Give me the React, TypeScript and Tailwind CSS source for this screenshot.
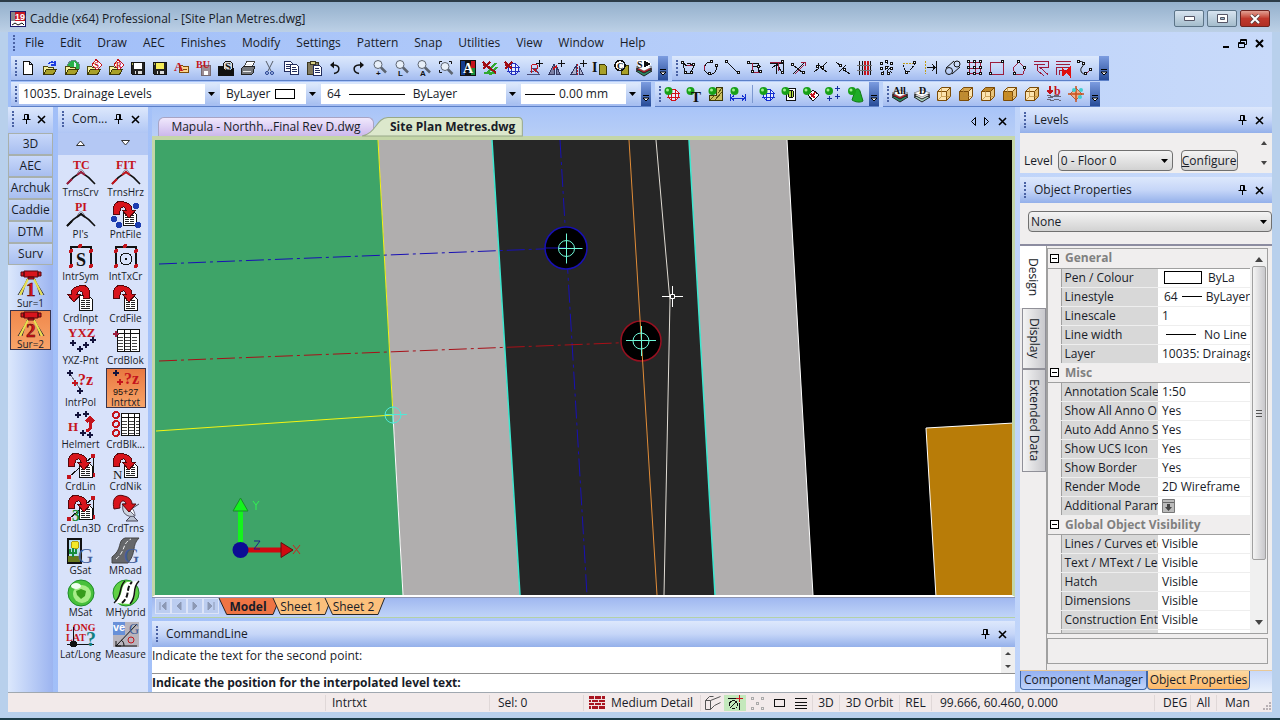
import React, { useState, ReactNode } from 'react';

const RED = '#c4141c';
const WINE = '#9c1c3c';
const NAVY = '#1c1c8c';

type IconProps = { children: ReactNode; size?: number };

const Icon = ({ children, size = 16 }: IconProps) => (
  <svg width={size} height={size} viewBox="0 0 16 16" fill="none" stroke="#111" strokeWidth="1" shapeRendering="crispEdges" className="shrink-0 overflow-visible">
    {children}
  </svg>
);

const Glyph = ({ x, y, size, fill = '#111', children }: { x: number; y: number; size: number; fill?: string; children: string }) => (
  <text x={x} y={y} fontSize={size} fill={fill} stroke="none" fontWeight="bold" fontFamily="Liberation Serif, serif">{children}</text>
);

const Folder = () => (
  <g>
    <path d="M1.500 14.500V6.500h4l1 1h5v3" fill="#f4f0a0" stroke="#4c4810" />
    <path d="M1.500 14.500l3-5h10l-3 5z" fill="#a8a028" stroke="#3c3808" />
  </g>
);

const Disk = ({ label = '#fff', body = '#222' }) => (
  <g>
    <path d="M1.500 2.500h13v12h-12l-1-1z" fill={body} stroke="#111" />
    <path d="M4 3h8v6H4z" fill={label} stroke="none" />
    <path d="M5 11h7v3H5z" fill="#ddd" stroke="none" />
    <path d="M6 11h2v3H6z" fill="#222" stroke="none" />
    <path d="M2 3h1v2H2z" fill="#b0b050" stroke="none" />
  </g>
);

const Magnifier = ({ letter }: { letter: string }) => (
  <g shapeRendering="auto">
    <circle cx="6" cy="4.500" r="4" fill="#e8f0fa" stroke="#5c6470" />
    <path d="M9 7.500l5 5" stroke="#5c6470" strokeWidth="2.500" />
    <text x="4" y="16" fontSize="8" fill="#111" stroke="none" fontWeight="bold" fontFamily="Liberation Sans, sans-serif">{letter}</text>
  </g>
);

const Pages = ({ x = 0 }) => (
  <g>
    <path d={`M${x + 0.5} 1.500h6l2 2v8h-8z`} fill="#fff" stroke="#222c5c" />
    <path d={`M${x + 2} 4.500h4M${x + 2} 6.500h5M${x + 2} 8.500h5`} stroke="#222c5c" />
  </g>
);

const Ball = ({ x = 4.5, y = 5 }) => (
  <g stroke="none" shapeRendering="auto">
    <circle cx={x} cy={y} r="4" fill="#18a018" />
    <circle cx={x - 1} cy={y - 1} r="1.500" fill="#a0f090" />
  </g>
);

const Stack = ({ top, base = '#2c8c64' }: { top: string; base?: string }) => (
  <g shapeRendering="auto">
    <path d="M0 11l8-3 8 3-8 5z" fill={base} stroke="#222" />
    <path d="M0 9l8-3 8 3-8 4z" fill={top} stroke="#222" />
    <path d="M0 7l8-3 8 3-8 4z" fill="#fff" stroke="#444" strokeWidth=".5" />
  </g>
);

const Cube = ({ top = '#fce4b0', front = '#fce4b0', side = '#e8c47c' }) => (
  <g stroke="#7c4c08" shapeRendering="auto">
    <path d="M1.500 5.500h9v9h-9z" fill={front} />
    <path d="M1.500 5.500l4-4h9l-4 4z" fill={top} />
    <path d="M10.500 5.500l4-4v9l-4 4z" fill={side} />
    <path d="M5.500 2v8.500h9M5.500 10.500l-4 4" stroke="#b88838" strokeWidth=".7" />
  </g>
);

const Nodes = ({ points }: { points: number[][] }) => (
  <g>
    {points.map(([x, y]) => <rect key={`${x}-${y}`} x={x - 0.5} y={y - 0.5} width="2" height="2" fill="#fff" stroke="#111" />)}
  </g>
);

const Cross = () => <path d="M1 2l7 7M8 2l-7 7M1 5l7 2" stroke="#a00c14" strokeWidth="2" />;

const Globe = ({ color }: { color: string }) => (
  <g stroke={color}>
    <circle cx="9.500" cy="9" r="5.500" fill="#fff" fillOpacity=".6" />
    <path d="M3 7.500h13M3 11.500h13M7.500 3v12M11.500 3v12" />
  </g>
);

const mainTools: [string, ReactNode][] = [
  ['New', <path d="M3.500 1.500h6l3 3v10h-9zM9.500 1.500v3h3" fill="#fff" />],
  ['Open', <><Folder /><path d="M6 4c3-3 6-2 7 0M13 1v4h-4" stroke="#1c3ce0" strokeWidth="1.500" /></>],
  ['Open from web', <><circle cx="9.500" cy="6.500" r="6" fill="#28b048" stroke="#688" /><path d="M9.500 1v9a5 5 0 0 0 0-9z" fill="#d8f0f0" stroke="none" /><Folder /></>],
  ['Open symbol', <><Folder /><path d="M10 -.500l6 5.500-5 5-5-5z" fill="#fff" stroke={RED} /><Glyph x={8} y={8} size={9} fill={RED}>S</Glyph></>],
  ['Open reference', <><Folder /><path d="M10 -.500l6 5.500-5 5-5-5z" fill="#fff" stroke={RED} /><Glyph x={8} y={8} size={8} fill={RED}>R</Glyph></>],
  ['Save', <Disk />],
  ['Save as', <Disk label="#f4ec58" />],
  ['Archive', <><path d="M5.500 12.500v-7h3l1 1h5v6z" fill="#fcd48c" stroke="#7c4c08" /><path d="M9 9.500h4" stroke="#7c4c08" /><Glyph x={0} y={11} size={13} fill={RED}>A</Glyph></>],
  ['Backup', <><path d="M5.500 5.500h9v10h-9z" fill="#9c8c94" stroke="#746870" /><path d="M8 11h4v4H8z" fill="#fff" stroke="none" /><Glyph x={0} y={8} size={10} fill={RED}>BU</Glyph></>],
  ['Scripts', <><path d="M0 15V6h4l2 2h9v7z" fill="#111" /><circle cx="10" cy="6" r="5" fill="#ddd" /><Glyph x={7} y={10} size={11}>S</Glyph></>],
  ['Print', <><path d="M4.500 6.500l2-5h8l-2 5z" fill="#fff" stroke="#444" /><path d="M1.500 8.500l2-2h11l-1 6-2 2h-10z" fill="#76787c" stroke="#222" /><path d="M3 11.500h8M6 4.500h6" stroke="#e8e8e8" /></>],
  ['Cut', <g shapeRendering="auto"><path d="M4 1l5 10M11 1L6 11" stroke="#555c68" /><circle cx="5" cy="13" r="1.500" stroke="#223c8c" /><circle cx="10" cy="13" r="1.500" stroke="#223c8c" /></g>],
  ['Copy', <><Pages /><g transform="translate(6 3)"><Pages /></g></>],
  ['Paste', <><path d="M1.500 2.500h11v12h-11z" fill="#80785c" stroke="#3c3820" /><path d="M4.500 1.500h5v3h-5z" fill="#d8d088" stroke="#3c3820" /><g transform="translate(7 4)"><Pages /></g></>],
  ['Undo', <g shapeRendering="auto"><path d="M6 13.500c6-1 7-8 0-8.500H3" strokeWidth="1.500" /><path d="M2 5l4-3.500v7z" fill="#111" stroke="none" /></g>],
  ['Redo', <g shapeRendering="auto"><path d="M9 13.500c-6-1-7-8 0-8.500h3" strokeWidth="1.500" /><path d="M14 5l-4-3.500v7z" fill="#111" stroke="none" /></g>],
  ['Zoom in', <Magnifier letter="+" />],
  ['Zoom last', <Magnifier letter="L" />],
  ['Zoom all', <Magnifier letter="A" />],
  ['Zoom extents', <g shapeRendering="auto"><circle cx="7" cy="6.500" r="4" fill="#e8f0fa" stroke="#5c6470" /><path d="M10 9.500l4.500 4.500" stroke="#5c6470" strokeWidth="2.500" /><path d="M1.500 4v-2.500H4M11 1.500h2.500V4M1.500 10v2.500H4" /></g>],
  ['Attributes', <><path d="M.500 .500h15v15H.500z" fill="#111" /><path d="M1 1h4v14H1z" fill="#143c8c" stroke="none" /><path d="M11 1h4v7h-4z" fill={RED} stroke="none" /><path d="M11 8h4v7h-4z" fill="#188c3c" stroke="none" /><Glyph x={3} y={13} size={14} fill="#fff">A</Glyph></>],
  ['Erase', <><path d="M4 14L14 3M8 15l7-8M2 13h12" stroke="#30a830" strokeWidth="2" /><Cross /><path d="M8 8l6 5" stroke="#a00c14" strokeWidth="2" /></>],
  ['Erase globe', <><Globe color="#2430c0" /><Cross /></>],
  ['Rotate copy', <><path d="M1 14.500h13M4 11h4M6 8h3l4 6" stroke="#484c78" /><path d="M5 13V7c0-4 7-3 7 0 0 3-5 2-5 2l5 4" stroke={RED} /><path d="M13.500 0v7M10 3.500h7" /></>],
  ['Move copy', <><path d="M1 14l5-10v10zM8 14V5l4 9z" fill="#7c80a4" stroke="#343860" /><path d="M5 9l4-3" stroke={RED} strokeWidth="2" /><path d="M13.500 0v7M10 3.500h7" /></>],
  ['Mirror copy', <><path d="M1 14l5-8v8zM9 14V6l4 8z" fill="#b0b4d0" stroke="#343860" /><path d="M7.500 4v12" stroke={RED} strokeDasharray="2 1" /><path d="M13.500 0v7M10 3.500h7" /></>],
  ['Insert page', <><path d="M7.500 4.500h5l2 2v8h-7z" fill="#a8a028" stroke="#3c3808" /><Glyph x={0} y={12} size={14}>I</Glyph></>],
  ['Exchange page', <><path d="M7.500 5.500h7v9h-7z" fill="#a8a028" stroke="#3c3808" /><circle cx="6" cy="5.500" r="5" fill="#fff" strokeWidth="1.500" /><Glyph x={3} y={9} size={9}>C</Glyph></>],
  ['Layers', <><Stack top="#c41c24" /><path d="M1 0h10l5 4-5 4H2z" fill="#fff" stroke="none" /><Glyph x={1} y={8} size={10}>S</Glyph><path d="M8 1l6 3-6 3z" fill="#111" /></>],
];

const lineTools: [string, ReactNode][] = [
  ['Polyline', <><path d="M2 3l4 3M6 3l7 2-3 8H4L2 3" /><path d="M6 5l7 0" stroke={WINE} /><Nodes points={[[1, 2], [12, 4], [10, 12], [4, 12]]} /></>],
  ['Curve', <><path d="M7 2C2 2 1 7 2 11l3 3h4c4-1 5-5 4-8" /><path d="M1.500 5v5" stroke={WINE} /><Nodes points={[[8, 1], [13, 5], [6, 13]]} /></>],
  ['Line', <><path d="M2 2l12 12" /><Nodes points={[[1, 1], [13, 12]]} /></>],
  ['Fillet', <><path d="M2 3.500h9.500v9M5 6.500h9" /><path d="M5.500 3v9.500h9" stroke={WINE} /><Nodes points={[[1, 2], [5, 11], [13, 11], [11, 6]]} /></>],
  ['Chamfer', <><path d="M1 3.500h13v10M3 8l5-4 5 9M7.500 4v10" /><path d="M1 2.500h12M9.500 3v8" stroke={WINE} /><Nodes points={[[13, 1], [13, 12]]} /></>],
  ['Trim', <><path d="M2 14L13 3M2 5l10 8" /><path d="M4 14l9-9M10 2h4v4" stroke={WINE} /><Nodes points={[[1, 4], [12, 12]]} /></>],
  ['Break', <><path d="M1 12l5-4M9 7l5-5M5 3l3 5 6 4" /><Nodes points={[[4, 6], [9, 7]]} /></>],
  ['Divide', <><path d="M1 2l5 4M9 10l6 4M11 5l-7 7" /><Nodes points={[[5, 5], [9, 9]]} /></>],
  ['Parallel', <><path d="M2.500 1v14M13.500 1v14M5.500 1v14" /><path d="M8 1v14M11 1v14" stroke={RED} strokeWidth="2" /><path d="M0 5.500h15M0 10.500h15" stroke="#777" /></>],
  ['Array', <><path d="M3 3l10 10M13 3L3 13M8 2v12M2 8h12" strokeDasharray="2 2" /><Nodes points={[[2, 3], [7, 1], [12, 3], [2, 8], [7, 7], [12, 8], [3, 13], [9, 13]]} /></>],
  ['Angle', <><path d="M2 5l4 9 8-10" strokeDasharray="2 1" /><path d="M2 3.500h12" stroke="#c09c14" strokeDasharray="2 1" /><Nodes points={[[13, 2], [5, 12]]} /></>],
  ['Extend', <><path d="M13.500 1v13M4 7.500h9M9 4l3 3.500L9 11" /><path d="M2.500 1v13" stroke="#c09c14" strokeDasharray="2 1" /></>],
  ['Tangent', <g shapeRendering="auto"><circle cx="4" cy="11" r="3.500" /><circle cx="12" cy="4" r="3" /><path d="M1 8l8-7M7 14l8-7" /></g>],
  ['Grid', <><path d="M2.500 2v12M8.500 2v12M13.500 2v12M2 2.500h12M2 8.500h12M2 13.500h12" stroke={WINE} /><Nodes points={[[1, 1], [7, 1], [13, 1], [1, 7], [7, 7], [13, 7], [1, 13], [7, 13], [13, 13]]} /></>],
  ['Rectangle', <><path d="M1.500 2.500h13v12h-13z" stroke={WINE} /><Nodes points={[[13, 1], [1, 13]]} /></>],
  ['Polygon', <><path d="M8 2l6 6-2 6H4L2 8z" stroke={WINE} /><Nodes points={[[7, 1], [13, 7], [3, 13]]} /></>],
  ['Offset', <path d="M1 1.500h14v6H7l8 7M1 4.500h10M12 4.500H4v6l7 5" stroke={WINE} />],
  ['Multi offset', <><path d="M1 1.500h15M1 4.500h14M1.500 15V7.500h13M4.500 15v-5h8" stroke={WINE} /><path d="M7 7l3 5 5-5v9l-3-4-4 4z" fill="#e01010" stroke="#e01010" /></>],
  ['Spline', <g shapeRendering="auto"><path d="M1 2c6-2 7 2 4 5s0 8 4 7l4-4" /><path d="M9 14l4-4" stroke={WINE} /><Nodes points={[[1, 1], [6, 3], [8, 13], [13, 9]]} /></g>],
];

const surveyTools: [string, ReactNode][] = [
  ['Model', <><Globe color="#d01018" /><Ball /></>],
  ['Text', <><Ball /><Glyph x={5} y={16} size={15}>T</Glyph></>],
  ['Section', <><path d="M8.500 1.500h6v13h-13v-5h7z" fill="#ccc060" stroke="#3c3808" /><path d="M2 14l5-5M7 14l7-8M10 7l4-5" stroke="#5c5410" /><Ball /></>],
  ['Dimension', <><Ball /><path d="M.500 8v7M15.500 8v7M1 12h14M4 9.500L1 12l3 2.500M12 9.500l3 2.500-3 2.500" stroke="#1430d0" /></>],
];

const modelTools: [string, ReactNode][] = [
  ['Surface', <><Globe color="#1430d0" /><Ball /></>],
  ['Contour', <><path d="M5.500 2.500h9v12h-9z" fill="#fff" /><ellipse cx="10" cy="8" rx="3" ry="4" fill="#b8e040" /><path d="M10 4v8" /><Ball /></>],
  ['Breakline', <><path d="M5 9l5-5 6 5-6 6z" fill="#fff" /><path d="M8 8l4 4M12 6l-3 5" stroke={RED} strokeWidth="2" /><Ball x={4} /></>],
  ['Points', <><Ball x={4} /><path d="M12.500 0v5M10 2.500h5M4.500 10v5M2 12.500h5M12.500 8v5M10 10.500h5" stroke="#1430a0" /></>],
  ['Cone', <g shapeRendering="auto"><path d="M5 14l3-9c1-3 4-3 5 0l3 10c-3 2-8 1-11-1z" fill="#20ac28" stroke="#107818" /><Ball x={5} y={5} /></g>],
];

const viewTools: [string, ReactNode][] = [
  ['All layers', <><Stack top="#c41c24" /><Glyph x={1} y={8} size={10}>All</Glyph></>],
  ['Default layer', <><Stack top="#f4f4f4" base="#a8d0c0" /><Glyph x={5} y={8} size={10}>D</Glyph></>],
  ['Isometric', <Cube />],
  ['Back view', <Cube front="#c08c30" top="#d8a850" side="#fce4b0" />],
  ['Top view', <Cube top="#c08828" />],
  ['Front view', <Cube front="#c88c24" />],
  ['Side view', <Cube side="#e4b868" />],
  ['Drop to level', <><path d="M1 10c3-2 4 2 7 0s4 1 7 0M1 14c3-2 4 2 7 0s4 1 7 0M2 12l11-2" stroke="#667" /><path d="M4 0v7M1.500 4.500L4 7.500l2.500-3" stroke={RED} strokeWidth="2" /><Glyph x={8} y={9} size={12} fill={RED}>b</Glyph></>],
  ['Rotate view', <g shapeRendering="auto"><path d="M8 2l6 6-6 6-6-6z" fill="#f0b090" stroke="#b06040" /><path d="M8 0v16M0 8h16" stroke="#c8501c" strokeWidth="1.500" /><circle cx="6" cy="4" r="2" fill="#40d0d0" stroke="none" /><circle cx="13" cy="4" r="2" fill="#40d0d0" stroke="none" /><circle cx="12" cy="11" r="2" fill="#40d0d0" stroke="none" /></g>],
];

const RedArrow = ({ flip = false }) => (
  <path
    d="M3 14C0 1 8-1 13 1c6 1 8 5 8 8h4l-7 8-7-8h4c-1-5-7-4-6 4z"
    fill="#d8141c"
    stroke="#54080c"
    transform={flip ? 'translate(26 0) scale(-1 1)' : undefined}
  />
);

const Sheet = ({ x = 14, y = 10 }) => (
  <g>
    <path d={`M${x + 0.5} ${y + 0.5}h9l4 4v11h-13z`} fill="#fff" stroke="#111" />
    <path d={`M${x + 2} ${y + 5.5}h4M${x + 7} ${y + 5.5}h4M${x + 2} ${y + 7.5}h4M${x + 7} ${y + 7.5}h4M${x + 2} ${y + 9.5}h4M${x + 7} ${y + 9.5}h4M${x + 2} ${y + 11.5}h4M${x + 7} ${y + 11.5}h4M${x + 2} ${y + 13.5}h9`} stroke="#222" />
  </g>
);

const Plus = ({ x, y, color = '#14143c' }: { x: number; y: number; color?: string }) => (
  <path d={`M${x - 3} ${y}h6M${x} ${y - 3}v6`} stroke={color} strokeWidth="2" />
);

const Bend = ({ color = '#111' }) => (
  <g shapeRendering="auto">
    <path d="M1 25c5-6 9-9 14-12 5 3 9 6 14 12" strokeWidth="1.500" />
    <path d="M11 16c2-7 6-7 8 0" stroke="#889" />
    <path d="M1 25l5-5M11 16l4-3 4 3" stroke={color} strokeWidth="2" />
  </g>
);

const Frame = ({ children }: { children: ReactNode }) => (
  <g>
    <path d="M5 22V4h20v20" strokeWidth="2" />
    {[[5, 8], [14, 3], [25, 8], [5, 23], [25, 23]].map(([x, y]) => <circle key={`${x}-${y}`} cx={x} cy={y} r="2" fill={RED} stroke="none" />)}
    {children}
  </g>
);

const Grid = ({ x = 6 }) => (
  <g>
    <path d={`M${x + 0.5} 2.500h${28 - x}v22h-${28 - x}z`} fill="#fff" />
    <path d={`M${x} 6.500h${29 - x}M${x + 7.5} 3v21M${x + 13.5} 3v21`} />
    <path d={`M${x + 1} 10.500h${27 - x}M${x + 1} 13.500h${27 - x}M${x + 1} 16.500h${27 - x}M${x + 1} 19.500h${27 - x}M${x + 1} 22.500h${27 - x}`} stroke="#444" strokeDasharray="5 2" />
  </g>
);

const LinePts = () => (
  <g>
    <path d="M3 24L27 3v20" />
    <path d="M1 22h4v4H1zM25 1h4v4h-4zM25 20h4v4h-4z" fill={RED} stroke="none" />
  </g>
);

const components: [string, ReactNode][] = [
  ['TrnsCrv', <><Bend color={WINE} /><Glyph x={7} y={10} size={12} fill={RED}>TC</Glyph></>],
  ['TrnsHrz', <><Bend color={RED} /><Glyph x={5} y={10} size={12} fill={RED}>FIT</Glyph></>],
  ["PI's", <><Bend /><Glyph x={9} y={10} size={12} fill={RED}>PI</Glyph></>],
  ['PntFile', <><Sheet x={12} y={9} /><RedArrow /><g fill="#1c3cb0" stroke="none"><circle cx="25" cy="5" r="3" /><circle cx="3" cy="18" r="3" /><circle cx="8" cy="24" r="3" /><circle cx="27" cy="24" r="3" /></g></>],
  ['IntrSym', <Frame><Glyph x={10} y={23} size={18}>S</Glyph></Frame>],
  ['IntTxCr', <Frame><circle cx="15" cy="16" r="6" /><circle cx="15" cy="16" r="1" fill="#111" /></Frame>],
  ['CrdInpt', <><Sheet x={13} /><RedArrow flip /></>],
  ['CrdFile', <><Sheet x={13} /><RedArrow /></>],
  ['YXZ-Pnt', <><Glyph x={2} y={10} size={13} fill={RED}>YXZ</Glyph><Plus x={7} y={16} /><Plus x={14} y={22} /><Plus x={20} y={18} /><Plus x={27} y={13} /></>],
  ['CrdBlok', <><Grid /><Plus x={5} y={7} color={WINE} /></>],
  ['IntrPol', <><path d="M4 5l12 18" stroke="#778" /><Plus x={4} y={4} /><Plus x={9} y={14} color={RED} /><Plus x={14} y={22} /><Glyph x={12} y={16} size={16} fill={RED}>?z</Glyph></>],
  ['Intrtxt', <><Plus x={5} y={4} /><Plus x={9} y={13} color={RED} /><Glyph x={13} y={15} size={16} fill={RED}>?z</Glyph><text x="2" y="26" fontSize="9" fill="#111" stroke="none" fontFamily="Liberation Sans">95+27</text></>],
  ['Helmert', <><Glyph x={2} y={20} size={13} fill={RED}>H</Glyph><path d="M20 20c7-2 5-8 4-12M20 11l4-4 4 4" stroke={RED} strokeWidth="3" /><Plus x={12} y={4} /><Plus x={20} y={3} /><Plus x={17} y={22} /><Plus x={24} y={24} /></>],
  ['CrdBlk...', <><Grid x={10} /><g stroke={RED} strokeWidth="2"><circle cx="5" cy="4" r="3" /><circle cx="5" cy="13" r="3" /><circle cx="5" cy="22" r="3" /></g></>],
  ['CrdLin', <><LinePts /><Sheet x={13} y={9} /><RedArrow /></>],
  ['CrdNik', <><Sheet x={13} y={9} /><RedArrow /><text x="2" y="26" fontSize="13" fill="#111" stroke="none" fontFamily="Liberation Serif">N</text></>],
  ['CrdLn3D', <><LinePts /><Sheet x={13} y={9} /><RedArrow /><Glyph x={6} y={26} size={16} fill="#188c30">3</Glyph></>],
  ['CrdTrns', <g shapeRendering="auto"><path d="M15 26l6-6 6 6z" fill="#b8c0d0" stroke="#445" /><path d="M12 9c-2 9 4 14 12 12z" fill="#cdd4e0" stroke="#556" /><path d="M12 9c6-2 12 6 12 12z" fill="#f8faff" stroke="#667" /><path d="M17 16L28 9" stroke="#445" /><RedArrow /></g>],
  ['GSat', <><path d="M1.500 1.500h13v24h-13z" fill="#b4dcf0" strokeWidth="2" /><path d="M2 19h12v6H2z" fill="#68781c" stroke="none" /><circle cx="9" cy="8" r="4" fill="#f4e828" stroke="#b09c10" /><path d="M7 20v-9M4 12v4h6v-4" stroke="#188c3c" strokeWidth="2" /><text x="12" y="26" fontSize="21" fill="#405c98" stroke="none" fontFamily="Liberation Serif">G</text></>],
  ['MRoad', <g shapeRendering="auto"><path d="M1 20C12 12 6 4 14 1h14c-8 8-2 14-11 25H1z" fill="#65676a" stroke="#444" /><path d="M5 22C15 14 11 6 20 2" stroke="#f4f4f4" strokeDasharray="4 2" /><text x="13" y="26" fontSize="21" fill="#405c98" stroke="none" fontFamily="Liberation Serif">G</text></g>],
  ['MSat', <g shapeRendering="auto"><circle cx="15" cy="14" r="13" fill="#48c03c" stroke="#1c8c28" /><circle cx="16" cy="15" r="9" fill="#a8ec88" stroke="none" /><path d="M10 12l5-2 5 2-1 5-4 3-4-4z" fill="#389c1c" stroke="none" /><ellipse cx="10" cy="7" rx="5" ry="3" fill="#f0fff0" stroke="none" /></g>],
  ['MHybrid', <g shapeRendering="auto"><circle cx="15" cy="14" r="13" fill="#60d044" stroke="#1c8c28" /><path d="M3 24C14 16 8 8 16 3l12-1c-7 8 0 14-9 23z" fill="#fff" stroke="none" /><path d="M3 24C12 17 7 8 14 2M19 25C27 16 20 10 28 2" strokeWidth="1.500" /><path d="M11 24c9-8 3-14 10-21" strokeWidth="2" strokeDasharray="5 2" /></g>],
  ['Lat/Long', <><Glyph x={0} y={10} size={10} fill={RED}>LONG</Glyph><Glyph x={0} y={20} size={10} fill={RED}>LAT</Glyph><path d="M7.500 6v20M1 23.500h27" /><circle cx="7.500" cy="23" r="3" fill="#111" /><Glyph x={20} y={25} size={20} fill="#148080">?</Glyph></>],
  ['Measure', <g shapeRendering="auto"><path d="M2 1h12v13H2z" fill="#6890d8" stroke="none" /><path d="M14 1h14v25H2V14h12z" fill="#b8b4bc" stroke="none" /><text x="2" y="10" fontSize="11" fontWeight="bold" fill="#fff" stroke="none" fontFamily="Liberation Sans">ve</text><path d="M4 25h22M5 25L26 3M5 20v5h5M13 25c0-3-1-5-3-6" /><circle cx="20" cy="19" r="3" stroke={RED} /><text x="18" y="13" fontSize="14" fill="#405c98" stroke="none" fontFamily="Liberation Serif">G</text></g>],
];

const menus = ['File', 'Edit', 'Draw', 'AEC', 'Finishes', 'Modify', 'Settings', 'Pattern', 'Snap', 'Utilities', 'View', 'Window', 'Help'];

const groups: { title: string; rows: [string, ReactNode][] }[] = [
  {
    title: 'General',
    rows: [
      ['Pen / Colour', <span className="flex items-center gap-[6px] pl-[2px]"><span className="h-[13px] w-[38px] shrink-0 border border-black bg-white" />ByLa</span>],
      ['Linestyle', <span className="flex items-center gap-1 pl-[2px]">64<span className="w-[20px] shrink-0 border-t border-black" />ByLayer</span>],
      ['Linescale', '1'],
      ['Line width', <span className="flex items-center gap-2 pl-1"><span className="w-[30px] shrink-0 border-t border-black" />No Line</span>],
      ['Layer', '10035: Drainage L'],
    ],
  },
  {
    title: 'Misc',
    rows: [
      ['Annotation Scale', '1:50'],
      ['Show All Anno O', 'Yes'],
      ['Auto Add Anno S', 'Yes'],
      ['Show UCS Icon', 'Yes'],
      ['Show Border', 'Yes'],
      ['Render Mode', '2D Wireframe'],
      ['Additional Param', (
        <button aria-label="Additional parameters" className="block">
          <svg width="13" height="14" viewBox="0 0 13 14"><path d="M.5 .5h12v13H.500z" fill="#bbb" stroke="#777" /><path d="M1 3.500h11" stroke="#666" /><path d="M5 5h3v3h2l-3.500 4L3 8h2z" fill="#444" /></svg>
        </button>
      )],
    ],
  },
  {
    title: 'Global Object Visibility',
    rows: [
      ['Lines / Curves etc', 'Visible'],
      ['Text / MText / Le', 'Visible'],
      ['Hatch', 'Visible'],
      ['Dimensions', 'Visible'],
      ['Construction Enti', 'Visible'],
      ['', ''],
    ],
  },
];

const Grip = () => <span className="h-[16px] w-[2px] shrink-0 border-l-2 border-dotted border-[#4a62a4]" />;

const PinClose = ({ gap = 'gap-2' }: { gap?: string }) => (
  <div className={`flex items-center ${gap}`}>
    <button aria-label="Pin"><svg width="9" height="10" viewBox="0 0 9 10" fill="none" stroke="#000"><path d="M2.500 .5h4v5h-4zM5.500 1v4M.5 5.500h8M4.500 6v4" /></svg></button>
    <button aria-label="Close"><svg width="9" height="9" viewBox="0 0 9 9" fill="none" stroke="#000" strokeWidth="1.600"><path d="M1 1l7 7M8 1l-7 7" /></svg></button>
  </div>
);

const Caption = ({ title }: { title: string }) => (
  <div className="flex h-[26px] shrink-0 items-center bg-linear-to-b from-[#dde8fc] via-[#c6d6f8] to-[#94b0ea] pr-2 pl-1">
    <Grip />
    <h2 className="ml-2 flex-1 truncate">{title}</h2>
    <PinClose />
  </div>
);

const Overflow = () => (
  <button aria-label="More buttons" className="flex w-[10px] shrink-0 items-end justify-center bg-linear-to-b from-[#7c9ce0] to-[#284c98] pb-1">
    <svg width="8" height="7" viewBox="0 0 8 7"><path d="M1 .5h6" stroke="#000" /><path d="M1 3h6L4 6z" fill="#fff" stroke="#000" /></svg>
  </button>
);

const Bar = ({ children }: { children: ReactNode }) => (
  <div className="flex h-[25px] border-b border-[#5c80c8] bg-linear-to-b from-[#dce8fc] via-[#c4d6f8] to-[#a4bcf0]">
    <div className="flex items-center pr-[3px] pl-1">
      <Grip />
      {children}
    </div>
    <Overflow />
  </div>
);

const Tools = ({ items }: { items: [string, ReactNode][] }) => (
  <>
    {items.map(([label, art]) => (
      <button key={label} aria-label={label} title={label} className="flex h-[22px] w-[22px] shrink-0 items-center justify-center">
        <Icon>{art}</Icon>
      </button>
    ))}
  </>
);

type ComboProps = { label: string; value: string; className: string; before?: ReactNode; after?: ReactNode };

const Combo = ({ label, value, className, before, after }: ComboProps) => (
  <label className={`flex h-[20px] items-center bg-white ${className}`}>
    {before}
    <select aria-label={label} className="min-w-0 flex-1 appearance-none bg-transparent leading-5 outline-none">
      <option>{value}</option>
    </select>
    {after}
    <span className="flex h-[20px] w-[12px] shrink-0 items-center justify-center bg-linear-to-b from-[#dce8fc] to-[#a8c0f0]">
      <svg width="7" height="4" viewBox="0 0 7 4"><path d="M0 0h7L3.500 4z" /></svg>
    </span>
  </label>
);

const GreyCombo = ({ label, value, className }: ComboProps) => (
  <div className={`flex items-center rounded-sm border border-[#707070] bg-linear-to-b from-[#f4f4f4] to-[#d2d2d2] pr-1 pl-[2px] ${className}`}>
    <select aria-label={label} className="min-w-0 flex-1 appearance-none bg-transparent leading-4 outline-none">
      <option>{value}</option>
    </select>
    <svg width="7" height="4" viewBox="0 0 7 4" className="shrink-0"><path d="M0 0h7L3.500 4z" /></svg>
  </div>
);

const TitleBar = () => (
  <header className="flex h-[32px] shrink-0 items-center border-t-2 border-[#2c3c48] bg-linear-to-b from-[#94b0cc] to-[#bcd0e6] px-[10px] pt-[3px]">
    <svg width="16" height="16" viewBox="0 0 16 16">
      <path d="M0 0h16v16H0z" fill="#1c1c6c" />
      <path d="M1 1h14v10H1z" fill="#fff" />
      <path d="M5 1h10v9H5z" fill="#c81824" />
      <text x="5" y="9" fontSize="9" fontWeight="bold" fill="#fff" fontFamily="Liberation Sans">19</text>
      <path d="M2 1v9M4 1v9" stroke="#111" />
      <path d="M1 11h14v4H1z" fill="#fff" />
      <path d="M2 14l3-2 3 2 4-2 2 2" stroke="#111" fill="none" />
    </svg>
    <h1 className="ml-1 flex-1">Caddie (x64) Professional - [Site Plan Metres.dwg]</h1>
    <div className="flex gap-[3px]">
      <button aria-label="Minimize" className="flex h-[17px] w-[30px] items-center justify-center rounded-xs border border-[#5c7488] bg-linear-to-b from-[#d8e4f0] to-[#a4bccc]">
        <svg width="11" height="5" viewBox="0 0 11 5"><path d="M.5 .5h10v4H.500z" fill="#fff" stroke="#556" /></svg>
      </button>
      <button aria-label="Restore" className="flex h-[17px] w-[30px] items-center justify-center rounded-xs border border-[#5c7488] bg-linear-to-b from-[#d8e4f0] to-[#a4bccc]">
        <svg width="11" height="9" viewBox="0 0 11 9"><path d="M.5 .5h10v8H.500z" fill="#fff" stroke="#556" /><path d="M3.500 3.500h4v2h-4z" fill="#9bc" stroke="#556" /></svg>
      </button>
      <button aria-label="Close" className="flex h-[17px] w-[30px] items-center justify-center rounded-xs border border-[#6c2420] bg-linear-to-b from-[#e0a094] via-[#c0382c] to-[#b03024]">
        <svg width="12" height="10" viewBox="0 0 12 10"><path d="M2 1l8 8M10 1L2 9" stroke="#544" strokeWidth="3.500" /><path d="M2 1l8 8M10 1L2 9" stroke="#fff" strokeWidth="2" /></svg>
      </button>
    </div>
  </header>
);

const MenuBar = () => (
  <div className="flex h-[24px] shrink-0 items-center pr-2 pb-[2px] pl-[5px]">
    <Grip />
    <nav className="ml-[2px] flex flex-1">
      {menus.map(menu => <button key={menu} className="px-2">{menu}</button>)}
    </nav>
    <div className="flex items-center gap-2">
      <button aria-label="Minimize drawing"><svg width="8" height="9" viewBox="0 0 8 9"><path d="M1 8h6" stroke="#000" strokeWidth="2" /></svg></button>
      <button aria-label="Restore drawing"><svg width="9" height="9" viewBox="0 0 9 9" fill="none" stroke="#000"><path d="M2.500 3V.5h6v5H7M3 1.500h5M.5 3.500h6v5h-6zM1 4.500h5" /></svg></button>
      <button aria-label="Close drawing"><svg width="9" height="9" viewBox="0 0 9 9" stroke="#000" strokeWidth="2"><path d="M1 1l7 7M8 1L1 8" /></svg></button>
    </div>
  </div>
);

const Toolbars = () => (
  <div className="flex shrink-0 flex-col gap-px pl-[3px]">
    <div className="flex gap-1">
      <Bar><Tools items={mainTools} /></Bar>
      <Bar><Tools items={lineTools} /></Bar>
    </div>
    <div className="flex gap-1">
      <Bar>
        <div className="ml-[2px] flex gap-[3px]">
          <Combo label="Layer" value="10035. Drainage Levels" className="w-[198px] pl-1" />
          <Combo label="Pen colour" value="ByLayer" className="w-[98px] pl-[6px]" after={<span className="mr-[11px] h-[10px] w-[20px] shrink-0 border border-black" />} />
          <Combo label="Linestyle" value="ByLayer" className="w-[197px] pl-[6px]" before={<><span>64</span><span className="mr-2 ml-2 w-[56px] border-t border-black" /></>} />
          <Combo label="Line width" value="0.00 mm" className="w-[117px] pl-1" before={<span className="mr-1 w-[30px] border-t border-black" />} />
        </div>
      </Bar>
      <Bar>
        <Tools items={surveyTools} />
        <span className="mx-[3px] h-[18px] border-l border-[#7c98d0]" />
        <Tools items={modelTools} />
      </Bar>
      <Bar><Tools items={viewTools} /></Bar>
    </div>
  </div>
);

const Tripod = ({ digit }: { digit: string }) => (
  <svg width="30" height="27" viewBox="0 0 30 27" fill="none" className="shrink-0">
    <path d="M12 9L2 25M18 9l10 16M11 9l-5 16M19 9l5 16" stroke="#333" />
    <path d="M12 9L4 25M18 9l8 16" stroke="#e8e050" strokeWidth="2" />
    <path d="M8 1h14v6H8zM5 2h3v4H5zM22 2h3v4h-3zM12 7h6v2h-6z" fill="#d8141c" stroke="#54080c" />
    <text x="10" y="26" fontSize="19" fontWeight="bold" fontFamily="Liberation Serif, serif" fill="#d8141c" stroke="#400" strokeWidth=".5">{digit}</text>
  </svg>
);

const CategoryColumn = () => {
  const [survey, setSurvey] = useState<number>(2);

  return (
    <aside className="flex w-[45px] shrink-0 flex-col bg-linear-to-r from-[#dce8fc] to-[#9cb4f0]">
      <div className="flex h-[26px] shrink-0 items-center justify-between bg-linear-to-b from-[#dde8fc] to-[#b0c6f4] pr-[7px] pb-[2px] pl-1">
        <Grip />
        <PinClose gap="gap-[6px]" />
      </div>
      {['3D', 'AEC', 'Archuk', 'Caddie', 'DTM', 'Surv'].map(name => (
        <button key={name} className="h-[22px] shrink-0 border border-[#a8b0ac] bg-linear-to-b from-[#c8d8fa] to-[#a8bef0]">{name}</button>
      ))}
      <div className="flex flex-col gap-px px-[2px] pt-1">
        {[1, 2].map(n => (
          <button
            key={n}
            onClick={() => setSurvey(n)}
            className={`flex h-[40px] flex-col items-center border text-[10px] leading-3 ${survey === n ? 'border-[#38344c] bg-linear-to-b from-[#f0884c] to-[#f8a468]' : 'border-transparent'}`}
          >
            <Tripod digit={String(n)} />
            Sur={n}
          </button>
        ))}
      </div>
    </aside>
  );
};

const ComponentColumn = () => {
  const [active, setActive] = useState<string>('Intrtxt');

  return (
    <aside className="ml-[5px] flex w-[90px] shrink-0 flex-col bg-[#d8e2fa]">
      <div className="flex h-[26px] shrink-0 items-center bg-linear-to-b from-[#dde8fc] to-[#b0c6f4] pr-2 pb-[2px] pl-1">
        <Grip />
        <h2 className="ml-2 flex-1 truncate">Com...</h2>
        <PinClose />
      </div>
      <div className="flex h-[22px] shrink-0 items-center justify-around bg-[#b4c8f4] pb-[3px]">
        <button aria-label="Scroll up"><svg width="9" height="6" viewBox="0 0 9 6"><path d="M.5 5.500L4.500 1l4 4.500z" fill="#fff" stroke="#333" /></svg></button>
        <button aria-label="Scroll down"><svg width="9" height="6" viewBox="0 0 9 6"><path d="M.5 .5L4.500 5l4-4.500z" fill="#fff" stroke="#333" /></svg></button>
      </div>
      <div className="grid grid-cols-2 justify-items-center gap-y-[2px] pt-[3px]">
        {components.map(([name, art]) => (
          <button
            key={name}
            onClick={() => setActive(name)}
            className={`flex h-[40px] w-[40px] flex-col items-center border text-[10px] leading-3 whitespace-nowrap ${active === name ? 'border-[#38344c] bg-linear-to-b from-[#e87840] to-[#f8a468]' : 'border-transparent'}`}
          >
            <svg width="30" height="27" viewBox="0 0 30 27" fill="none" stroke="#111" shapeRendering="crispEdges" className="shrink-0 overflow-visible">{art}</svg>
            {name}
          </button>
        ))}
      </div>
    </aside>
  );
};

const Marker = ({ x, y, r = 8 }: { x: number; y: number; r?: number }) => (
  <g stroke="#70f8d8" fill="none">
    <circle cx={x} cy={y} r={r} />
    <path d={`M${x - r} ${y}h${r * 3}M${x} ${y - 15}v30`} />
  </g>
);

const Drawing = () => (
  <svg className="block h-full w-full bg-black" viewBox="155 140 857 455" preserveAspectRatio="xMinYMin slice" fill="none">
    <path d="M155 140h223l15 275 10 180H155z" fill="#3ea468" />
    <path d="M378 140h114l28 455H403l-10-180z" fill="#b0aeae" />
    <path d="M492 140h197l26 455H520z" fill="#262626" />
    <path d="M689 140h98l26 455h-98z" fill="#b0aeae" />
    <path d="M926 428l88-5v174h-78z" fill="#b87c08" stroke="#fff" />
    <path d="M378 140l15 275-237 16" stroke="#f4f414" />
    <path d="M393 415l10 180M787 140l26 455" stroke="#fff" />
    <path d="M492 140l28 455M689 140l26 455" stroke="#3ce8d0" strokeWidth="1.500" />
    <g stroke="#1810b4" strokeDasharray="18 4 3 4">
      <path d="M159 264l407-16M560 140l27 455" />
    </g>
    <path d="M159 361l482-19" stroke="#a81018" strokeDasharray="18 4 3 4" />
    <path d="M656 140l13 150 1 10-6 295" stroke="#e0dcd4" />
    <circle cx="566" cy="248" r="21" fill="#000" stroke="#1810b4" strokeWidth="1.500" />
    <path d="M545 248h21" stroke="#1810b4" />
    <circle cx="641" cy="341" r="20" fill="#000" stroke="#981020" strokeWidth="1.500" />
    <path d="M629 140l28 455" stroke="#e08c38" />
    <Marker x={566.5} y={248.5} />
    <g stroke="#70f8d8"><circle cx="641" cy="341" r="8" /><path d="M626 340.500h30M641.500 326v30" /></g>
    <g stroke="#50e8d8"><circle cx="393" cy="415" r="8" /><path d="M385 414.500h22M393 406v18" /></g>
    <path d="M662 296.500h8M675 296.500h8M672.500 286v8M672.500 299v8M670.500 294.500h4v4h-4z" stroke="#fff" />
    <g>
      <path d="M240.500 548v-40" stroke="#14f41c" strokeWidth="5" />
      <path d="M233 511l7.500-13 7.500 13z" fill="#14f41c" stroke="#188c28" />
      <path d="M244 550h38" stroke="#d00810" strokeWidth="5" />
      <path d="M281 542.500l12 7.500-12 7.500z" fill="#d00810" stroke="#601010" />
      <circle cx="240.500" cy="550" r="8" fill="#0c0c94" />
      <path d="M253 501l3 4 3-4M256 505v5" stroke="#30f450" />
      <path d="M293 545l7 9M300 545l-7 9" stroke="#d02020" />
      <path d="M254 541h6l-6 8h6" stroke={NAVY} />
    </g>
  </svg>
);

const DocumentTabs = () => (
  <div className="flex h-[33px] shrink-0 items-end border-b-4 border-[#c4d6a8] bg-linear-to-b from-[#a8c4f8] to-[#b8cef6] pr-2 pl-[6px]">
    <button className="h-[19px] w-[216px] rounded-t-md border border-b-0 border-[#a8a4c4] bg-linear-to-b from-[#f0e8fc] to-[#ccb8ec] leading-4">Mapula - Northh...Final Rev D.dwg</button>
    <button className="relative h-[19px] pr-2 pl-4 leading-4 font-bold">
      <svg className="absolute inset-0 h-full w-full overflow-visible" viewBox="0 0 150 18" preserveAspectRatio="none"><path d="M-12 18C2 16 2 1 14 .5H145q4 0 4 4V18z" fill="#dce8cc" stroke="#98a888" /></svg>
      <span className="relative">Site Plan Metres.dwg</span>
    </button>
    <div className="ml-auto flex items-center gap-1 self-center">
      <button aria-label="Previous drawing"><svg width="8" height="9" viewBox="0 0 8 9"><path d="M5.500 .5v8l-4-4z" fill="none" stroke="#000" /></svg></button>
      <button aria-label="Next drawing"><svg width="8" height="9" viewBox="0 0 8 9"><path d="M2.500 .5v8l4-4z" fill="none" stroke="#000" /></svg></button>
      <button aria-label="Close drawing tab" className="ml-1"><svg width="9" height="9" viewBox="0 0 9 9" stroke="#000" strokeWidth="1.600"><path d="M1 1l7 7M8 1L1 8" /></svg></button>
    </div>
  </div>
);

const SheetTabs = () => {
  const [sheet, setSheet] = useState<string>('Model');

  return (
    <div className="flex h-[21px] shrink-0 items-start border-t border-b border-t-[#8c94b0] border-b-[#b4d0a8] bg-linear-to-b from-[#a0b8f0] to-[#c0d4f8] pl-[3px]">
      {['M3 1v8M9 1L5 5l4 4z', 'M8 1L4 5l4 4z', 'M4 1l4 4-4 4z', 'M9 1v8M3 1l4 4-4 4z'].map(d => (
        <button key={d} aria-label="Scroll sheets" className="flex h-[16px] w-[16px] items-center justify-center border border-[#dce4f8] bg-[#bccdf0]">
          <svg width="12" height="10" viewBox="0 0 12 10"><path d={d} fill="#8c98b4" stroke="#8c98b4" /></svg>
        </button>
      ))}
      {[['Model', 'w-[54px]'], ['Sheet 1', 'w-[52px]'], ['Sheet 2', 'w-[53px]']].map(([name, width]) => (
        <button key={name} onClick={() => setSheet(name)} className={`relative h-[17px] pl-1 leading-4 ${width} ${sheet === name ? 'font-bold' : ''}`}>
          <svg className="absolute inset-0 h-full w-full overflow-visible" viewBox="0 0 56 17" preserveAspectRatio="none">
            <path d="M0 0h63l-7 16.500H8z" fill={sheet === name ? '#ee7444' : '#fcc07c'} />
            <path d="M0 0l8 16.500h48L63 0" fill="none" stroke="#222" />
          </svg>
          <span className="relative">{name}</span>
        </button>
      ))}
    </div>
  );
};

const CommandLine = () => (
  <section className="mt-[3px] flex shrink-0 flex-col">
    <Caption title="CommandLine" />
    <div className="flex h-[27px] border-b border-[#909090] bg-white">
      <p className="flex-1 leading-[18px]">Indicate the text for the second point:</p>
      <div className="flex w-[14px] flex-col items-center justify-around bg-[#efefef]">
        <svg width="6" height="3" viewBox="0 0 6 3"><path d="M0 3h6L3 0z" fill="#444" /></svg>
        <svg width="6" height="3" viewBox="0 0 6 3"><path d="M0 0h6L3 3z" fill="#444" /></svg>
      </div>
    </div>
    <input aria-label="Command" defaultValue="Indicate the position for the interpolated level text:" className="h-[18px] w-full bg-white pb-[2px] font-bold outline-none" />
  </section>
);

const LevelsPanel = () => (
  <section className="shrink-0">
    <Caption title="Levels" />
    <div className="flex h-[40px] bg-[#f0eeee]">
      <div className="flex flex-1 items-end pb-[2px] pl-1">
        <span className="leading-5">Level</span>
        <GreyCombo label="Level" value="0 - Floor 0" className="ml-[5px] h-[21px] w-[115px]" />
        <button className="ml-2 h-[21px] rounded-sm border border-[#707070] bg-linear-to-b from-[#f4f4f4] to-[#d2d2d2]"><u>C</u>onfigure</button>
      </div>
      <div className="flex w-[17px] flex-col items-center justify-between py-2">
        <svg width="6" height="4" viewBox="0 0 6 4"><path d="M0 4h6L3 0z" fill="#444" /></svg>
        <svg width="6" height="4" viewBox="0 0 6 4"><path d="M0 0h6L3 4z" fill="#444" /></svg>
      </div>
    </div>
  </section>
);

const PropertyTable = () => (
  <div className="flex min-h-0 flex-1 border border-[#a0a0a0] bg-[#f0eeee]">
    <div className="min-h-0 min-w-0 flex-1 overflow-hidden">
      <table className="w-full table-fixed border-collapse">
        <colgroup>
          <col className="w-[13px]" />
          <col className="w-[97px]" />
          <col />
        </colgroup>
        {groups.map(group => (
          <tbody key={group.title}>
            <tr className="h-[19px] border-b border-[#a0a0a0]">
              <td className="p-0">
                <button aria-label={`Collapse ${group.title}`} className="ml-[2px] flex h-[9px] w-[9px] items-center justify-center border border-black bg-white">
                  <span className="w-[5px] border-t border-black" />
                </button>
              </td>
              <th colSpan={2} scope="rowgroup" className="p-0 pl-1 text-left leading-4 font-bold text-[#808080]">{group.title}</th>
            </tr>
            {group.rows.map(([name, value]) => (
              <tr key={name} className="h-[19px]">
                <td className="p-0" />
                <th scope="row" className="overflow-hidden border-b border-l border-[#eeeeee] border-l-[#a0a0a0] bg-[#d8d8d8] p-0 pl-[3px] text-left leading-4 font-normal whitespace-nowrap">{name}</th>
                <td className="overflow-hidden border-b border-[#eeeeee] bg-white p-0 pl-1 leading-4 whitespace-nowrap">{value}</td>
              </tr>
            ))}
          </tbody>
        ))}
      </table>
    </div>
    <div className="flex w-[17px] shrink-0 flex-col items-center justify-between bg-[#f0f0f0] py-1">
      <svg width="8" height="5" viewBox="0 0 8 5" className="my-1 shrink-0"><path d="M0 5h8L4 0z" fill="#444" /></svg>
      <div className="mb-14 flex w-[14px] flex-1 flex-col items-center justify-center rounded-xs border border-[#a0a0a0] bg-linear-to-r from-[#f4f4f4] to-[#c8c8cc]">
        <span className="flex h-[7px] w-[6px] items-center border-y border-[#555]"><span className="w-full border-t border-[#555]" /></span>
      </div>
      <svg width="8" height="5" viewBox="0 0 8 5" className="my-1 shrink-0"><path d="M0 0h8L4 5z" fill="#444" /></svg>
    </div>
  </div>
);

const PropertiesPanel = () => {
  const [tab, setTab] = useState<string>('Design');

  return (
    <section className="mt-1 flex min-h-0 flex-1 flex-col">
      <Caption title="Object Properties" />
      <div className="flex min-h-0 flex-1 flex-col bg-[#f0eeee]">
        <div className="pt-2 pr-0 pb-3 pl-2">
          <GreyCombo label="Selected object" value="None" className="h-[21px]" />
        </div>
        <div className="flex min-h-0 flex-1 border-t-2 border-[#8c8ca0]">
          <div className="flex w-[27px] shrink-0 flex-col border-r border-[#a0a0a0]">
            {[['Design', 'h-[62px]'], ['Display', 'h-[61px]'], ['Extended Data', 'h-[103px]']].map(([name, height]) => (
              <button
                key={name}
                onClick={() => setTab(name)}
                className={`flex shrink-0 items-center justify-center border-[#909098] [writing-mode:vertical-rl] ${height} ${tab === name ? 'bg-white' : 'ml-[2px] border bg-linear-to-r from-[#f4f4f4] to-[#c8c8cc]'}`}
              >
                {name}
              </button>
            ))}
          </div>
          <div className="flex min-h-0 min-w-0 flex-1 flex-col gap-1 pt-[2px] pr-1 pb-[6px]">
            <PropertyTable />
            <div className="h-[26px] shrink-0 border border-[#a0a0a0]" />
          </div>
        </div>
      </div>
      <div className="flex h-[22px] shrink-0 border-t border-[#e8c898] bg-linear-to-b from-[#c8d8f8] to-[#e8f0fc]">
        <button className="h-[19px] w-[127px] rounded-b-sm border border-t-0 border-[#4068a8] bg-linear-to-b from-[#94b0f0] to-[#c0d4fc] leading-4">Component Manager</button>
        <button className="h-[19px] w-[103px] rounded-b-sm border border-t-0 border-[#4068a8] bg-linear-to-b from-[#fcd8a0] to-[#fcb868] leading-4">Object Properties</button>
      </div>
    </section>
  );
};

const StatusBar = () => (
  <footer className="mx-2 flex h-[20px] shrink-0 items-center border-t border-[#a0a8b0] bg-[#f2eaea] leading-4">
    <span className="w-[318px] border-r border-[#e0d8d8]">&nbsp;</span>
    <span className="w-[164px] border-r border-[#e0d8d8] pl-[6px]">Intrtxt</span>
    <span className="w-[94px] border-r border-[#e0d8d8] pl-2">Sel: 0</span>
    <button className="flex w-[117px] items-center gap-[6px] border-r border-[#e0d8d8] pl-[5px]">
      <svg width="16" height="13" viewBox="0 0 16 13"><path d="M0 0h16v13H0z" fill="#a81420" /><path d="M0 3.500h16M0 6.500h16M0 9.500h16M5.500 0v3M12.500 0v3M2.500 4v3M9.500 4v3M5.500 7v3M12.500 7v3M2.500 10v3M9.500 10v3" stroke="#f0e0e0" /></svg>
      Medium Detail
    </button>
    <button aria-label="Perspective" className="flex w-[23px] justify-center"><Icon><g shapeRendering="auto"><path d="M.500 5.500h5v9h-5zM.500 5.500l4-4h4M5.500 5.500l10-4M8.500 1.500v0M5.500 14.500l4-4 6-3" stroke="#555" /></g></Icon></button>
    <button aria-label="Snap" className="flex w-[22px] justify-center bg-[#c4e8bc]"><Icon><circle cx="6.500" cy="9.500" r="4" /><path d="M4 12l6-6M1 3.500h8M12.500 8v7" /><path d="M12.500 0v7M9 3.500h7" stroke={RED} /></Icon></button>
    <button aria-label="Points" className="flex w-[22px] justify-center"><Icon><path d="M2.500 2.500h2v2h-2zM12.500 2.500h2v2h-2zM7.500 7.500h2v2h-2zM2.500 12.500h2v2h-2zM12.500 12.500h2v2h-2z" stroke="#aaa" /></Icon></button>
    <button aria-label="Frame" className="flex w-[22px] justify-center"><Icon><path d="M3.500 4.500h10v7h-10z" /></Icon></button>
    <button aria-label="Line weight" className="flex w-[22px] justify-center"><Icon><path d="M2 3.500h12M2 7.500h12M2 10.500h12M2 13.500h12" /></Icon></button>
    <button className="w-[28px] border-x border-[#e0d8d8]">3D</button>
    <button className="w-[60px] border-r border-[#e0d8d8]">3D Orbit</button>
    <button className="w-[32px] border-r border-[#e0d8d8]">REL</button>
    <span className="flex-1 pl-2">99.666, 60.460, 0.000</span>
    <span className="w-[36px] border-l border-[#e0d8d8] pl-2">DEG</span>
    <span className="w-[27px] border-x border-[#e0d8d8] text-center">All</span>
    <span className="flex w-[55px] items-end pl-2">
      <span className="flex-1">Man</span>
      <svg width="10" height="10" viewBox="0 0 10 10" fill="#b8b0b4"><path d="M7 1h2v2H7zM7 4h2v2H7zM4 4h2v2H4zM7 7h2v2H7zM4 7h2v2H4zM1 7h2v2H1z" /></svg>
    </span>
  </footer>
);

const App: React.FC = () => (
  <div className="flex h-screen min-h-[640px] w-full flex-col overflow-hidden bg-[#b8d0ec] font-['Open_Sans','Noto_Sans',sans-serif] text-[12px] leading-4 text-[#181c28]">
    <TitleBar />
    <div className="mx-2 flex min-h-0 flex-1 flex-col bg-linear-to-r from-[#a0bef8] to-[#c8dafa]">
      <MenuBar />
      <Toolbars />
      <div className="flex min-h-0 flex-1">
        <CategoryColumn />
        <ComponentColumn />
        <main className="ml-1 flex min-w-0 flex-1 flex-col">
          <DocumentTabs />
          <div className="min-h-0 flex-1 border-x-[3px] border-b-2 border-[#c4d6a8] border-b-white">
            <Drawing />
          </div>
          <SheetTabs />
          <CommandLine />
        </main>
        <div className="ml-[5px] flex w-[252px] shrink-0 flex-col">
          <LevelsPanel />
          <PropertiesPanel />
        </div>
      </div>
    </div>
    <StatusBar />
    <div className="h-2 shrink-0 border-b-2 border-[#1c3c48]" />
  </div>
);

export default App;
